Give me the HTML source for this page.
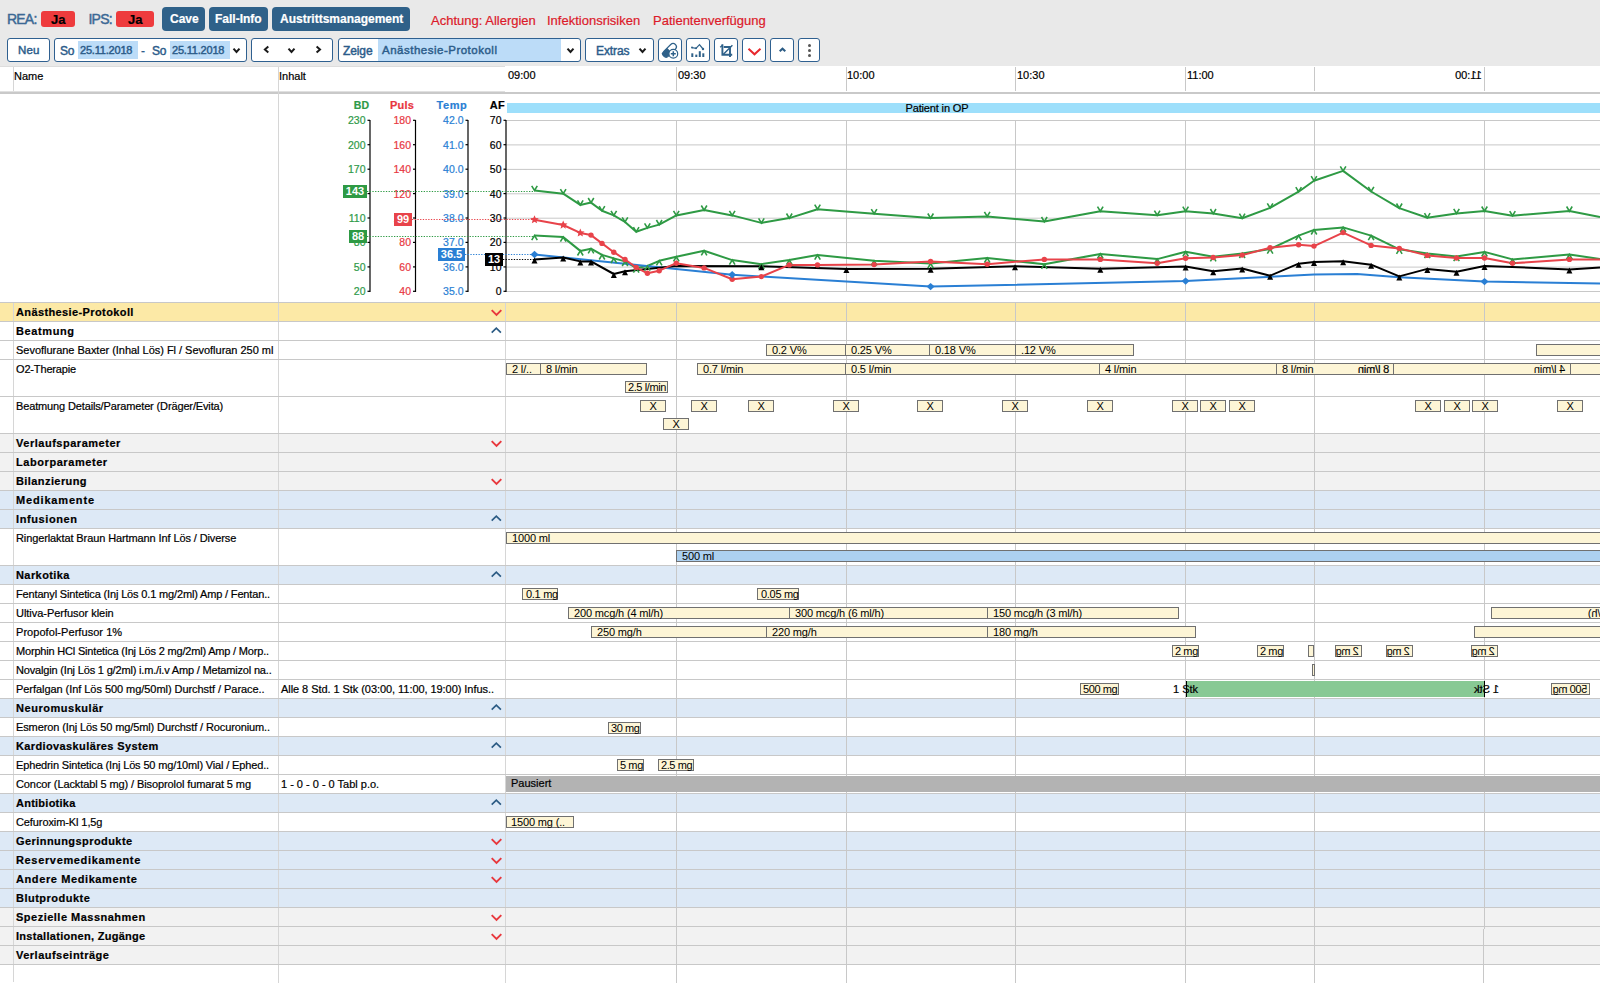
<!DOCTYPE html><html><head><meta charset="utf-8"><style>
html,body{margin:0;padding:0;}
body{width:1600px;height:988px;position:relative;overflow:hidden;background:#fff;font-family:"Liberation Sans", sans-serif;}
.t{position:absolute;white-space:nowrap;line-height:1;-webkit-text-stroke:0.2px;}
.r{position:absolute;box-sizing:border-box;}
.bar{position:absolute;box-sizing:border-box;border:1px solid #707070;background:#fdf5d6;font-size:11px;line-height:9px;white-space:nowrap;overflow:visible;color:#000;letter-spacing:-0.15px;}
.mir{transform:scaleX(-1);}
svg{position:absolute;left:0;top:0;}
</style></head><body>
<div class="r" style="left:0px;top:0px;width:1600px;height:67px;background:#e9e9e9;"></div>
<div class="t" style="left:7px;top:12.15px;font-size:14px;font-weight:normal;color:#3b6894;letter-spacing:-0.8px;-webkit-text-stroke:0.45px #3b6894;">REA:</div>
<div class="r" style="left:41px;top:11px;width:34px;height:16px;background:#ee3b3d;border-radius:3px;"></div>
<div class="t" style="left:51px;top:12.60px;font-size:13px;font-weight:bold;color:#000;">Ja</div>
<div class="t" style="left:88.5px;top:12.15px;font-size:14px;font-weight:normal;color:#3b6894;letter-spacing:-0.8px;-webkit-text-stroke:0.45px #3b6894;">IPS:</div>
<div class="r" style="left:116px;top:11px;width:38px;height:16px;background:#ee3b3d;border-radius:3px;"></div>
<div class="t" style="left:128px;top:12.60px;font-size:13px;font-weight:bold;color:#000;">Ja</div>
<div class="r" style="left:162px;top:7px;width:43px;height:24px;background:#2f6189;border-radius:4px;"></div>
<div class="t" style="left:170px;top:13.44px;font-size:12px;font-weight:bold;color:#fff;">Cave</div>
<div class="r" style="left:209px;top:7px;width:59px;height:24px;background:#2f6189;border-radius:4px;"></div>
<div class="t" style="left:215px;top:13.44px;font-size:12px;font-weight:bold;color:#fff;">Fall-Info</div>
<div class="r" style="left:272px;top:7px;width:138px;height:24px;background:#2f6189;border-radius:4px;"></div>
<div class="t" style="left:280px;top:13.44px;font-size:12px;font-weight:bold;color:#fff;">Austrittsmanagement</div>
<div class="t" style="left:431px;top:14.00px;font-size:13px;font-weight:normal;color:#dc1a2a;">Achtung: Allergien</div>
<div class="t" style="left:547px;top:14.00px;font-size:13px;font-weight:normal;color:#dc1a2a;">Infektionsrisiken</div>
<div class="t" style="left:653px;top:14.00px;font-size:13px;font-weight:normal;color:#dc1a2a;">Patientenverfügung</div>
<div class="r" style="left:7px;top:38px;width:43px;height:24px;background:#fff;border:1px solid #2f6090;border-radius:3px;"></div>
<div class="t" style="left:18px;top:44.87px;font-size:11.5px;font-weight:normal;color:#2c5c8a;letter-spacing:0.2px;-webkit-text-stroke:0.45px #2c5c8a;">Neu</div>
<div class="r" style="left:54px;top:38px;width:193px;height:24px;background:#fff;border:1px solid #2f6090;border-radius:3px;"></div>
<div class="t" style="left:60px;top:44.64px;font-size:12px;font-weight:normal;color:#2c5c8a;letter-spacing:-0.3px;-webkit-text-stroke:0.45px #2c5c8a;">So</div>
<div class="r" style="left:78px;top:41px;width:60px;height:17.5px;background:#bcdcf8;"></div>
<div class="t" style="left:80px;top:45.29px;font-size:11px;font-weight:normal;color:#2c5c8a;letter-spacing:-0.2px;-webkit-text-stroke:0.45px #2c5c8a;">25.11.2018</div>
<div class="t" style="left:141px;top:44.64px;font-size:12px;font-weight:normal;color:#2c5c8a;">-</div>
<div class="t" style="left:152px;top:44.64px;font-size:12px;font-weight:normal;color:#2c5c8a;letter-spacing:-0.3px;-webkit-text-stroke:0.45px #2c5c8a;">So</div>
<div class="r" style="left:170px;top:41px;width:60px;height:17.5px;background:#bcdcf8;"></div>
<div class="t" style="left:172px;top:45.29px;font-size:11px;font-weight:normal;color:#2c5c8a;letter-spacing:-0.2px;-webkit-text-stroke:0.45px #2c5c8a;">25.11.2018</div>
<div class="r" style="left:251px;top:38px;width:82px;height:24px;background:#fff;border:1px solid #2f6090;border-radius:3px;"></div>
<div class="r" style="left:338px;top:38px;width:243px;height:24px;background:#fff;border:1px solid #2f6090;border-radius:3px;"></div>
<div class="t" style="left:343px;top:44.64px;font-size:12px;font-weight:normal;color:#2c5c8a;letter-spacing:-0.1px;-webkit-text-stroke:0.45px #2c5c8a;">Zeige</div>
<div class="r" style="left:378px;top:39px;width:183px;height:22px;background:#bcdcf8;"></div>
<div class="t" style="left:382px;top:44.87px;font-size:11.5px;font-weight:normal;color:#2c5c8a;letter-spacing:0.5px;-webkit-text-stroke:0.45px #2c5c8a;">Anästhesie-Protokoll</div>
<div class="r" style="left:585px;top:38px;width:69px;height:24px;background:#fff;border:1px solid #2f6090;border-radius:3px;"></div>
<div class="t" style="left:596px;top:44.64px;font-size:12px;font-weight:normal;color:#2c5c8a;letter-spacing:-0.1px;-webkit-text-stroke:0.45px #2c5c8a;">Extras</div>
<div class="r" style="left:658px;top:38px;width:24px;height:24px;background:#fff;border:1px solid #2f6090;border-radius:3px;"></div>
<div class="r" style="left:686px;top:38px;width:24px;height:24px;background:#fff;border:1px solid #2f6090;border-radius:3px;"></div>
<div class="r" style="left:714px;top:38px;width:24px;height:24px;background:#fff;border:1px solid #2f6090;border-radius:3px;"></div>
<div class="r" style="left:742px;top:38px;width:24px;height:24px;background:#fff;border:1px solid #2f6090;border-radius:3px;"></div>
<div class="r" style="left:770px;top:38px;width:24px;height:24px;background:#fff;border:1px solid #2f6090;border-radius:3px;"></div>
<div class="r" style="left:798px;top:38px;width:22px;height:24px;background:#fff;border:1px solid #2f6090;border-radius:3px;"></div>
<div class="r" style="left:0px;top:303px;width:1600px;height:18px;background:#fce9a6;"></div>
<div class="r" style="left:0px;top:322px;width:1600px;height:18px;background:#fff;"></div>
<div class="r" style="left:0px;top:341px;width:1600px;height:18px;background:#fff;"></div>
<div class="r" style="left:0px;top:360px;width:1600px;height:36px;background:#fff;"></div>
<div class="r" style="left:0px;top:397px;width:1600px;height:36px;background:#fff;"></div>
<div class="r" style="left:0px;top:434px;width:1600px;height:18px;background:#f2f2f2;"></div>
<div class="r" style="left:0px;top:453px;width:1600px;height:18px;background:#f2f2f2;"></div>
<div class="r" style="left:0px;top:472px;width:1600px;height:18px;background:#f2f2f2;"></div>
<div class="r" style="left:0px;top:491px;width:1600px;height:18px;background:#dde9f6;"></div>
<div class="r" style="left:0px;top:510px;width:1600px;height:18px;background:#dde9f6;"></div>
<div class="r" style="left:0px;top:529px;width:1600px;height:36px;background:#fff;"></div>
<div class="r" style="left:0px;top:566px;width:1600px;height:18px;background:#dde9f6;"></div>
<div class="r" style="left:0px;top:585px;width:1600px;height:18px;background:#fff;"></div>
<div class="r" style="left:0px;top:604px;width:1600px;height:18px;background:#fff;"></div>
<div class="r" style="left:0px;top:623px;width:1600px;height:18px;background:#fff;"></div>
<div class="r" style="left:0px;top:642px;width:1600px;height:18px;background:#fff;"></div>
<div class="r" style="left:0px;top:661px;width:1600px;height:18px;background:#fff;"></div>
<div class="r" style="left:0px;top:680px;width:1600px;height:18px;background:#fff;"></div>
<div class="r" style="left:0px;top:699px;width:1600px;height:18px;background:#dde9f6;"></div>
<div class="r" style="left:0px;top:718px;width:1600px;height:18px;background:#fff;"></div>
<div class="r" style="left:0px;top:737px;width:1600px;height:18px;background:#dde9f6;"></div>
<div class="r" style="left:0px;top:756px;width:1600px;height:18px;background:#fff;"></div>
<div class="r" style="left:0px;top:775px;width:1600px;height:18px;background:#fff;"></div>
<div class="r" style="left:0px;top:794px;width:1600px;height:18px;background:#dde9f6;"></div>
<div class="r" style="left:0px;top:813px;width:1600px;height:18px;background:#fff;"></div>
<div class="r" style="left:0px;top:832px;width:1600px;height:18px;background:#dde9f6;"></div>
<div class="r" style="left:0px;top:851px;width:1600px;height:18px;background:#dde9f6;"></div>
<div class="r" style="left:0px;top:870px;width:1600px;height:18px;background:#dde9f6;"></div>
<div class="r" style="left:0px;top:889px;width:1600px;height:18px;background:#dde9f6;"></div>
<div class="r" style="left:0px;top:908px;width:1600px;height:18px;background:#f2f2f2;"></div>
<div class="r" style="left:0px;top:927px;width:1600px;height:18px;background:#f2f2f2;"></div>
<div class="r" style="left:0px;top:946px;width:1600px;height:18px;background:#f2f2f2;"></div>
<div class="r" style="left:0px;top:67px;width:1600px;height:24px;background:#fff;"></div>
<div class="r" style="left:0px;top:66px;width:505px;height:1px;background:#dddddd;"></div>
<div class="r" style="left:505px;top:66px;width:1095px;height:1px;background:#fff;"></div>
<div class="r" style="left:0px;top:91px;width:505px;height:1px;background:#e0e0e0;"></div>
<div class="r" style="left:0px;top:92px;width:1600px;height:2px;background:#c9c9c9;"></div>
<div class="r" style="left:13px;top:67px;width:1px;height:24px;background:#d6d6d6;"></div>
<div class="r" style="left:13px;top:303px;width:1px;height:679px;background:#d6d6d6;"></div>
<div class="r" style="left:278px;top:67px;width:1px;height:916px;background:#d6d6d6;"></div>
<div class="r" style="left:505px;top:303px;width:1px;height:680px;background:#d6d6d6;"></div>
<div class="r" style="left:676px;top:67px;width:1px;height:24px;background:#c8c8c8;"></div>
<div class="r" style="left:676px;top:94px;width:1px;height:889px;background:#c8c8c8;"></div>
<div class="r" style="left:846px;top:67px;width:1px;height:24px;background:#c8c8c8;"></div>
<div class="r" style="left:846px;top:94px;width:1px;height:889px;background:#c8c8c8;"></div>
<div class="r" style="left:1015px;top:67px;width:1px;height:24px;background:#c8c8c8;"></div>
<div class="r" style="left:1015px;top:94px;width:1px;height:889px;background:#c8c8c8;"></div>
<div class="r" style="left:1185px;top:67px;width:1px;height:24px;background:#c8c8c8;"></div>
<div class="r" style="left:1185px;top:94px;width:1px;height:889px;background:#c8c8c8;"></div>
<div class="r" style="left:1314px;top:67px;width:1px;height:24px;background:#c8c8c8;"></div>
<div class="r" style="left:1314px;top:94px;width:1px;height:889px;background:#c8c8c8;"></div>
<div class="r" style="left:1484px;top:67px;width:1px;height:24px;background:#c8c8c8;"></div>
<div class="r" style="left:1484px;top:94px;width:1px;height:835px;background:#c8c8c8;"></div>
<div class="r" style="left:1483px;top:929px;width:1px;height:54px;background:#c8c8c8;"></div>
<div class="r" style="left:0px;top:302px;width:1600px;height:1px;background:#c8c8c8;"></div>
<div class="r" style="left:0px;top:321px;width:1600px;height:1px;background:#c8c8c8;"></div>
<div class="r" style="left:0px;top:340px;width:1600px;height:1px;background:#c8c8c8;"></div>
<div class="r" style="left:0px;top:359px;width:1600px;height:1px;background:#c8c8c8;"></div>
<div class="r" style="left:0px;top:396px;width:1600px;height:1px;background:#c8c8c8;"></div>
<div class="r" style="left:0px;top:433px;width:1600px;height:1px;background:#c8c8c8;"></div>
<div class="r" style="left:0px;top:452px;width:1600px;height:1px;background:#c8c8c8;"></div>
<div class="r" style="left:0px;top:471px;width:1600px;height:1px;background:#c8c8c8;"></div>
<div class="r" style="left:0px;top:490px;width:1600px;height:1px;background:#c8c8c8;"></div>
<div class="r" style="left:0px;top:509px;width:1600px;height:1px;background:#c8c8c8;"></div>
<div class="r" style="left:0px;top:528px;width:1600px;height:1px;background:#c8c8c8;"></div>
<div class="r" style="left:0px;top:565px;width:1600px;height:1px;background:#c8c8c8;"></div>
<div class="r" style="left:0px;top:584px;width:1600px;height:1px;background:#c8c8c8;"></div>
<div class="r" style="left:0px;top:603px;width:1600px;height:1px;background:#c8c8c8;"></div>
<div class="r" style="left:0px;top:622px;width:1600px;height:1px;background:#c8c8c8;"></div>
<div class="r" style="left:0px;top:641px;width:1600px;height:1px;background:#c8c8c8;"></div>
<div class="r" style="left:0px;top:660px;width:1600px;height:1px;background:#c8c8c8;"></div>
<div class="r" style="left:0px;top:679px;width:1600px;height:1px;background:#c8c8c8;"></div>
<div class="r" style="left:0px;top:698px;width:1600px;height:1px;background:#c8c8c8;"></div>
<div class="r" style="left:0px;top:717px;width:1600px;height:1px;background:#c8c8c8;"></div>
<div class="r" style="left:0px;top:736px;width:1600px;height:1px;background:#c8c8c8;"></div>
<div class="r" style="left:0px;top:755px;width:1600px;height:1px;background:#c8c8c8;"></div>
<div class="r" style="left:0px;top:774px;width:1600px;height:1px;background:#c8c8c8;"></div>
<div class="r" style="left:0px;top:793px;width:1600px;height:1px;background:#c8c8c8;"></div>
<div class="r" style="left:0px;top:812px;width:1600px;height:1px;background:#c8c8c8;"></div>
<div class="r" style="left:0px;top:831px;width:1600px;height:1px;background:#c8c8c8;"></div>
<div class="r" style="left:0px;top:850px;width:1600px;height:1px;background:#c8c8c8;"></div>
<div class="r" style="left:0px;top:869px;width:1600px;height:1px;background:#c8c8c8;"></div>
<div class="r" style="left:0px;top:888px;width:1600px;height:1px;background:#c8c8c8;"></div>
<div class="r" style="left:0px;top:907px;width:1600px;height:1px;background:#c8c8c8;"></div>
<div class="r" style="left:0px;top:926px;width:1600px;height:1px;background:#c8c8c8;"></div>
<div class="r" style="left:0px;top:945px;width:1600px;height:1px;background:#c8c8c8;"></div>
<div class="r" style="left:0px;top:964px;width:1600px;height:1px;background:#c8c8c8;"></div>
<div class="t" style="left:14px;top:71.09px;font-size:11px;font-weight:normal;color:#000;">Name</div>
<div class="t" style="left:279px;top:71.09px;font-size:11px;font-weight:normal;color:#000;">Inhalt</div>
<div class="t" style="left:508px;top:69.69px;font-size:11px;font-weight:normal;color:#000;">09:00</div>
<div class="t" style="left:678px;top:69.69px;font-size:11px;font-weight:normal;color:#000;">09:30</div>
<div class="t" style="left:847px;top:69.69px;font-size:11px;font-weight:normal;color:#000;">10:00</div>
<div class="t" style="left:1017px;top:69.69px;font-size:11px;font-weight:normal;color:#000;">10:30</div>
<div class="t" style="left:1187px;top:69.69px;font-size:11px;font-weight:normal;color:#000;">11:00</div>
<div class="t mir" style="left:1455px;top:69.7px;font-size:11px;">11:00</div>
<div class="t" style="left:16px;top:307.09px;font-size:11px;font-weight:bold;color:#000;letter-spacing:0.387px;">Anästhesie-Protokoll</div>
<div class="t" style="left:16px;top:326.09px;font-size:11px;font-weight:bold;color:#000;letter-spacing:0.607px;">Beatmung</div>
<div class="t" style="left:16px;top:345.09px;font-size:11px;font-weight:normal;color:#000;letter-spacing:-0.024px;">Sevoflurane Baxter (Inhal Lös) Fl / Sevofluran 250 ml</div>
<div class="t" style="left:16px;top:364.09px;font-size:11px;font-weight:normal;color:#000;letter-spacing:-0.155px;">O2-Therapie</div>
<div class="t" style="left:16px;top:401.09px;font-size:11px;font-weight:normal;color:#000;letter-spacing:-0.138px;">Beatmung Details/Parameter (Dräger/Evita)</div>
<div class="t" style="left:16px;top:438.09px;font-size:11px;font-weight:bold;color:#000;letter-spacing:0.522px;">Verlaufsparameter</div>
<div class="t" style="left:16px;top:457.09px;font-size:11px;font-weight:bold;color:#000;letter-spacing:0.565px;">Laborparameter</div>
<div class="t" style="left:16px;top:476.09px;font-size:11px;font-weight:bold;color:#000;letter-spacing:0.414px;">Bilanzierung</div>
<div class="t" style="left:16px;top:495.09px;font-size:11px;font-weight:bold;color:#000;letter-spacing:0.835px;">Medikamente</div>
<div class="t" style="left:16px;top:514.09px;font-size:11px;font-weight:bold;color:#000;letter-spacing:0.606px;">Infusionen</div>
<div class="t" style="left:16px;top:533.09px;font-size:11px;font-weight:normal;color:#000;letter-spacing:-0.106px;">Ringerlaktat Braun Hartmann Inf Lös / Diverse</div>
<div class="t" style="left:16px;top:570.09px;font-size:11px;font-weight:bold;color:#000;letter-spacing:0.419px;">Narkotika</div>
<div class="t" style="left:16px;top:589.09px;font-size:11px;font-weight:normal;color:#000;letter-spacing:-0.154px;">Fentanyl Sintetica (Inj Lös 0.1 mg/2ml) Amp / Fentan..</div>
<div class="t" style="left:16px;top:608.09px;font-size:11px;font-weight:normal;color:#000;letter-spacing:-0.038px;">Ultiva-Perfusor klein</div>
<div class="t" style="left:16px;top:627.09px;font-size:11px;font-weight:normal;color:#000;letter-spacing:0.05px;">Propofol-Perfusor 1%</div>
<div class="t" style="left:16px;top:646.09px;font-size:11px;font-weight:normal;color:#000;letter-spacing:-0.188px;">Morphin HCl Sintetica (Inj Lös 2 mg/2ml) Amp / Morp..</div>
<div class="t" style="left:16px;top:665.09px;font-size:11px;font-weight:normal;color:#000;letter-spacing:-0.174px;">Novalgin (Inj Lös 1 g/2ml) i.m./i.v Amp / Metamizol na..</div>
<div class="t" style="left:16px;top:684.09px;font-size:11px;font-weight:normal;color:#000;letter-spacing:-0.053px;">Perfalgan (Inf Lös 500 mg/50ml) Durchstf / Parace..</div>
<div class="t" style="left:281px;top:684.09px;font-size:11px;font-weight:normal;color:#000;letter-spacing:-0.059px;">Alle 8 Std. 1 Stk (03:00, 11:00, 19:00) Infus..</div>
<div class="t" style="left:16px;top:703.09px;font-size:11px;font-weight:bold;color:#000;letter-spacing:0.538px;">Neuromuskulär</div>
<div class="t" style="left:16px;top:722.09px;font-size:11px;font-weight:normal;color:#000;letter-spacing:-0.115px;">Esmeron (Inj Lös 50 mg/5ml) Durchstf / Rocuronium..</div>
<div class="t" style="left:16px;top:741.09px;font-size:11px;font-weight:bold;color:#000;letter-spacing:0.38px;">Kardiovaskuläres System</div>
<div class="t" style="left:16px;top:760.09px;font-size:11px;font-weight:normal;color:#000;letter-spacing:-0.146px;">Ephedrin Sintetica (Inj Lös 50 mg/10ml) Vial / Ephed..</div>
<div class="t" style="left:16px;top:779.09px;font-size:11px;font-weight:normal;color:#000;letter-spacing:-0.099px;">Concor (Lacktabl 5 mg) / Bisoprolol fumarat 5 mg</div>
<div class="t" style="left:281px;top:779.09px;font-size:11px;font-weight:normal;color:#000;letter-spacing:-0.005px;">1 - 0 - 0 - 0 Tabl p.o.</div>
<div class="t" style="left:16px;top:798.09px;font-size:11px;font-weight:bold;color:#000;letter-spacing:0.245px;">Antibiotika</div>
<div class="t" style="left:16px;top:817.09px;font-size:11px;font-weight:normal;color:#000;letter-spacing:-0.097px;">Cefuroxim-Kl 1,5g</div>
<div class="t" style="left:16px;top:836.09px;font-size:11px;font-weight:bold;color:#000;letter-spacing:0.432px;">Gerinnungsprodukte</div>
<div class="t" style="left:16px;top:855.09px;font-size:11px;font-weight:bold;color:#000;letter-spacing:0.656px;">Reservemedikamente</div>
<div class="t" style="left:16px;top:874.09px;font-size:11px;font-weight:bold;color:#000;letter-spacing:0.603px;">Andere Medikamente</div>
<div class="t" style="left:16px;top:893.09px;font-size:11px;font-weight:bold;color:#000;letter-spacing:0.495px;">Blutprodukte</div>
<div class="t" style="left:16px;top:912.09px;font-size:11px;font-weight:bold;color:#000;letter-spacing:0.492px;">Spezielle Massnahmen</div>
<div class="t" style="left:16px;top:931.09px;font-size:11px;font-weight:bold;color:#000;letter-spacing:0.289px;">Installationen, Zugänge</div>
<div class="t" style="left:16px;top:950.09px;font-size:11px;font-weight:bold;color:#000;letter-spacing:0.49px;">Verlaufseinträge</div>
<div class="bar" style="left:766px;top:344px;width:80px;height:12px;background:#fdf5d6;border-color:#707070;padding-left:5px;line-height:10px;">0.2 V%</div>
<div class="bar" style="left:845px;top:344px;width:85px;height:12px;background:#fdf5d6;border-color:#707070;padding-left:5px;line-height:10px;">0.25 V%</div>
<div class="bar" style="left:929px;top:344px;width:87px;height:12px;background:#fdf5d6;border-color:#707070;padding-left:5px;line-height:10px;">0.18 V%</div>
<div class="bar" style="left:1015px;top:344px;width:119px;height:12px;background:#fdf5d6;border-color:#707070;padding-left:5px;line-height:10px;">.12 V%</div>
<div class="bar" style="left:1536px;top:344px;width:65px;height:12px;background:#fdf5d6;border-color:#707070;padding-left:5px;line-height:10px;"></div>
<div class="bar" style="left:506px;top:363px;width:35px;height:12px;background:#fdf5d6;border-color:#707070;padding-left:5px;line-height:10px;">2 l/..</div>
<div class="bar" style="left:540px;top:363px;width:107px;height:12px;background:#fdf5d6;border-color:#707070;padding-left:5px;line-height:10px;">8 l/min</div>
<div class="bar" style="left:697px;top:363px;width:149px;height:12px;background:#fdf5d6;border-color:#707070;padding-left:5px;line-height:10px;">0.7 l/min</div>
<div class="bar" style="left:845px;top:363px;width:255px;height:12px;background:#fdf5d6;border-color:#707070;padding-left:5px;line-height:10px;">0.5 l/min</div>
<div class="bar" style="left:1099px;top:363px;width:178px;height:12px;background:#fdf5d6;border-color:#707070;padding-left:5px;line-height:10px;">4 l/min</div>
<div class="bar" style="left:1276px;top:363px;width:118px;height:12px;background:#fdf5d6;border-color:#707070;padding-left:5px;line-height:10px;">8 l/min</div>
<div class="bar" style="left:1393px;top:363px;width:178px;height:12px;background:#fdf5d6;border-color:#707070;"><div class="mir" style="position:absolute;right:5px;top:0;line-height:10px;">4 l/min</div></div>
<div class="t mir" style="left:1358px;top:363.5px;font-size:11px;letter-spacing:-0.15px;">8 l/min</div>
<div class="bar" style="left:1570px;top:363px;width:31px;height:12px;background:#fdf5d6;border-color:#707070;padding-left:5px;line-height:10px;"></div>
<div class="bar" style="left:625px;top:381px;width:43px;height:12px;background:#fdf5d6;border-color:#707070;padding-left:2px;line-height:10px;letter-spacing:-0.4px;">2.5 l/min</div>
<div class="bar" style="left:640px;top:400px;width:26px;height:12px;text-align:center;line-height:10px;">X</div>
<div class="bar" style="left:691px;top:400px;width:26px;height:12px;text-align:center;line-height:10px;">X</div>
<div class="bar" style="left:748px;top:400px;width:26px;height:12px;text-align:center;line-height:10px;">X</div>
<div class="bar" style="left:833px;top:400px;width:26px;height:12px;text-align:center;line-height:10px;">X</div>
<div class="bar" style="left:917px;top:400px;width:26px;height:12px;text-align:center;line-height:10px;">X</div>
<div class="bar" style="left:1002px;top:400px;width:26px;height:12px;text-align:center;line-height:10px;">X</div>
<div class="bar" style="left:1087px;top:400px;width:26px;height:12px;text-align:center;line-height:10px;">X</div>
<div class="bar" style="left:1172px;top:400px;width:26px;height:12px;text-align:center;line-height:10px;">X</div>
<div class="bar" style="left:1200px;top:400px;width:26px;height:12px;text-align:center;line-height:10px;">X</div>
<div class="bar" style="left:1229px;top:400px;width:26px;height:12px;text-align:center;line-height:10px;">X</div>
<div class="bar" style="left:1415px;top:400px;width:26px;height:12px;text-align:center;line-height:10px;">X</div>
<div class="bar" style="left:1444px;top:400px;width:26px;height:12px;text-align:center;line-height:10px;">X</div>
<div class="bar" style="left:1472px;top:400px;width:26px;height:12px;text-align:center;line-height:10px;">X</div>
<div class="bar" style="left:1557px;top:400px;width:26px;height:12px;text-align:center;line-height:10px;">X</div>
<div class="bar" style="left:663px;top:418px;width:26px;height:12px;text-align:center;line-height:10px;">X</div>
<div class="bar" style="left:506px;top:532px;width:1095px;height:12px;background:#fdf5d6;border-color:#707070;padding-left:5px;line-height:10px;">1000 ml</div>
<div class="bar" style="left:676px;top:550px;width:925px;height:12px;background:#acd0f0;border-color:#707070;padding-left:5px;line-height:10px;">500 ml</div>
<div class="bar" style="left:522px;top:588px;width:36px;height:12px;background:#fdf5d6;border-color:#707070;padding-left:3px;line-height:10px;letter-spacing:-0.3px;">0.1 mg</div>
<div class="bar" style="left:757px;top:588px;width:42px;height:12px;background:#fdf5d6;border-color:#707070;padding-left:3px;line-height:10px;letter-spacing:-0.3px;">0.05 mg</div>
<div class="bar" style="left:568px;top:607px;width:222px;height:12px;background:#fdf5d6;border-color:#707070;padding-left:5px;line-height:10px;">200 mcg/h (4 ml/h)</div>
<div class="bar" style="left:789px;top:607px;width:199px;height:12px;background:#fdf5d6;border-color:#707070;padding-left:5px;line-height:10px;">300 mcg/h (6 ml/h)</div>
<div class="bar" style="left:987px;top:607px;width:192px;height:12px;background:#fdf5d6;border-color:#707070;padding-left:5px;line-height:10px;">150 mcg/h (3 ml/h)</div>
<div class="bar" style="left:1491px;top:607px;width:110px;height:12px;overflow:hidden;"><div class="mir" style="position:absolute;left:96px;top:0;line-height:10px;">150 mcg/h (3 ml/h)</div></div>
<div class="bar" style="left:591px;top:626px;width:176px;height:12px;background:#fdf5d6;border-color:#707070;padding-left:5px;line-height:10px;">250 mg/h</div>
<div class="bar" style="left:766px;top:626px;width:222px;height:12px;background:#fdf5d6;border-color:#707070;padding-left:5px;line-height:10px;">220 mg/h</div>
<div class="bar" style="left:987px;top:626px;width:209px;height:12px;background:#fdf5d6;border-color:#707070;padding-left:5px;line-height:10px;">180 mg/h</div>
<div class="bar" style="left:1474px;top:626px;width:127px;height:12px;background:#fdf5d6;border-color:#707070;padding-left:5px;line-height:10px;"></div>
<div class="bar" style="left:1172px;top:645px;width:27px;height:12px;background:#fdf5d6;border-color:#707070;padding-left:2px;line-height:10px;letter-spacing:-0.4px;">2 mg</div>
<div class="bar" style="left:1257px;top:645px;width:27px;height:12px;background:#fdf5d6;border-color:#707070;padding-left:2px;line-height:10px;letter-spacing:-0.4px;">2 mg</div>
<div class="bar" style="left:1308px;top:645px;width:6px;height:12px;background:#fdf5d6;border-color:#707070;padding-left:0px;line-height:10px;"></div>
<div class="bar" style="left:1335px;top:645px;width:27px;height:12px;background:#fdf5d6;border-color:#707070;letter-spacing:-0.4px;"><div class="mir" style="position:absolute;right:2px;top:0;line-height:10px;">2 mg</div></div>
<div class="bar" style="left:1386px;top:645px;width:27px;height:12px;background:#fdf5d6;border-color:#707070;letter-spacing:-0.4px;"><div class="mir" style="position:absolute;right:2px;top:0;line-height:10px;">2 mg</div></div>
<div class="bar" style="left:1471px;top:645px;width:27px;height:12px;background:#fdf5d6;border-color:#707070;letter-spacing:-0.4px;"><div class="mir" style="position:absolute;right:2px;top:0;line-height:10px;">2 mg</div></div>
<div class="bar" style="left:1312px;top:664px;width:3px;height:12px;background:#fdf5d6;border-color:#707070;padding-left:0px;line-height:10px;"></div>
<div class="bar" style="left:1080px;top:683px;width:39px;height:12px;background:#fdf5d6;border-color:#707070;padding-left:2px;line-height:10px;letter-spacing:-0.4px;">500 mg</div>
<div class="r" style="left:1186px;top:681px;width:298px;height:16px;background:#88c994;"></div>
<div class="r" style="left:1185.5px;top:681px;width:1.5px;height:16px;background:#000;"></div>
<div class="r" style="left:1483.5px;top:681px;width:1.5px;height:16px;background:#000;"></div>
<div class="t" style="left:1173px;top:684.19px;font-size:11px;font-weight:normal;color:#000;">1 Stk</div>
<div class="t mir" style="left:1474px;top:684.2px;font-size:11px;">1 Stk</div>
<div class="bar" style="left:1551px;top:683px;width:39px;height:12px;background:#fdf5d6;border-color:#707070;letter-spacing:-0.4px;"><div class="mir" style="position:absolute;right:2px;top:0;line-height:10px;">500 mg</div></div>
<div class="bar" style="left:608px;top:722px;width:33px;height:12px;background:#fdf5d6;border-color:#707070;padding-left:2px;line-height:10px;letter-spacing:-0.4px;">30 mg</div>
<div class="bar" style="left:617px;top:759px;width:27px;height:12px;background:#fdf5d6;border-color:#707070;padding-left:2px;line-height:10px;letter-spacing:-0.4px;">5 mg</div>
<div class="bar" style="left:658px;top:759px;width:36px;height:12px;background:#fdf5d6;border-color:#707070;padding-left:2px;line-height:10px;letter-spacing:-0.4px;">2.5 mg</div>
<div class="r" style="left:506px;top:776px;width:1094px;height:16px;background:#b3b3b3;"></div>
<div class="t" style="left:511px;top:778.39px;font-size:11px;font-weight:normal;color:#000;">Pausiert</div>
<div class="bar" style="left:506px;top:816px;width:68px;height:12px;background:#fdf5d6;border-color:#707070;padding-left:4px;line-height:10px;">1500 mg (..</div>
<div class="r" style="left:279px;top:94px;width:1321px;height:208px;background:#fff;"></div>
<div class="r" style="left:507px;top:103px;width:1093px;height:10px;background:#9ddffb;"></div>
<div class="t" style="left:905.5px;top:102.99px;font-size:11px;font-weight:normal;color:#000;letter-spacing:-0.15px;">Patient in OP</div>
<div class="t" style="right:1234.5px;top:115.21px;font-size:10.5px;font-weight:normal;color:#2e9a48;">230</div>
<div class="t" style="right:1234.5px;top:139.64px;font-size:10.5px;font-weight:normal;color:#2e9a48;">200</div>
<div class="t" style="right:1234.5px;top:164.07px;font-size:10.5px;font-weight:normal;color:#2e9a48;">170</div>
<div class="t" style="right:1234.5px;top:188.50px;font-size:10.5px;font-weight:normal;color:#2e9a48;">140</div>
<div class="t" style="right:1234.5px;top:212.93px;font-size:10.5px;font-weight:normal;color:#2e9a48;">110</div>
<div class="t" style="right:1234.5px;top:237.35px;font-size:10.5px;font-weight:normal;color:#2e9a48;">80</div>
<div class="t" style="right:1234.5px;top:261.78px;font-size:10.5px;font-weight:normal;color:#2e9a48;">50</div>
<div class="t" style="right:1234.5px;top:286.21px;font-size:10.5px;font-weight:normal;color:#2e9a48;">20</div>
<div class="t" style="right:1230.5px;top:99.71px;font-size:10.5px;font-weight:bold;color:#2e9a48;letter-spacing:0.3px;">BD</div>
<div class="t" style="right:1189.0px;top:115.21px;font-size:10.5px;font-weight:normal;color:#e8373f;">180</div>
<div class="t" style="right:1189.0px;top:139.64px;font-size:10.5px;font-weight:normal;color:#e8373f;">160</div>
<div class="t" style="right:1189.0px;top:164.07px;font-size:10.5px;font-weight:normal;color:#e8373f;">140</div>
<div class="t" style="right:1189.0px;top:188.50px;font-size:10.5px;font-weight:normal;color:#e8373f;">120</div>
<div class="t" style="right:1189.0px;top:212.93px;font-size:10.5px;font-weight:normal;color:#e8373f;">100</div>
<div class="t" style="right:1189.0px;top:237.35px;font-size:10.5px;font-weight:normal;color:#e8373f;">80</div>
<div class="t" style="right:1189.0px;top:261.78px;font-size:10.5px;font-weight:normal;color:#e8373f;">60</div>
<div class="t" style="right:1189.0px;top:286.21px;font-size:10.5px;font-weight:normal;color:#e8373f;">40</div>
<div class="t" style="right:1186.0px;top:100.09px;font-size:11px;font-weight:bold;color:#e8373f;letter-spacing:0.2px;">Puls</div>
<div class="t" style="right:1136.5px;top:115.21px;font-size:10.5px;font-weight:normal;color:#2a7fd4;">42.0</div>
<div class="t" style="right:1136.5px;top:139.64px;font-size:10.5px;font-weight:normal;color:#2a7fd4;">41.0</div>
<div class="t" style="right:1136.5px;top:164.07px;font-size:10.5px;font-weight:normal;color:#2a7fd4;">40.0</div>
<div class="t" style="right:1136.5px;top:188.50px;font-size:10.5px;font-weight:normal;color:#2a7fd4;">39.0</div>
<div class="t" style="right:1136.5px;top:212.93px;font-size:10.5px;font-weight:normal;color:#2a7fd4;">38.0</div>
<div class="t" style="right:1136.5px;top:237.35px;font-size:10.5px;font-weight:normal;color:#2a7fd4;">37.0</div>
<div class="t" style="right:1136.5px;top:261.78px;font-size:10.5px;font-weight:normal;color:#2a7fd4;">36.0</div>
<div class="t" style="right:1136.5px;top:286.21px;font-size:10.5px;font-weight:normal;color:#2a7fd4;">35.0</div>
<div class="t" style="right:1132.6px;top:100.09px;font-size:11px;font-weight:bold;color:#2a7fd4;letter-spacing:0.6px;">Temp</div>
<div class="t" style="right:1098.5px;top:115.21px;font-size:10.5px;font-weight:normal;color:#000;">70</div>
<div class="t" style="right:1098.5px;top:139.64px;font-size:10.5px;font-weight:normal;color:#000;">60</div>
<div class="t" style="right:1098.5px;top:164.07px;font-size:10.5px;font-weight:normal;color:#000;">50</div>
<div class="t" style="right:1098.5px;top:188.50px;font-size:10.5px;font-weight:normal;color:#000;">40</div>
<div class="t" style="right:1098.5px;top:212.93px;font-size:10.5px;font-weight:normal;color:#000;">30</div>
<div class="t" style="right:1098.5px;top:237.35px;font-size:10.5px;font-weight:normal;color:#000;">20</div>
<div class="t" style="right:1098.5px;top:261.78px;font-size:10.5px;font-weight:normal;color:#000;">10</div>
<div class="t" style="right:1098.5px;top:286.21px;font-size:10.5px;font-weight:normal;color:#000;">0</div>
<div class="t" style="right:1095.0px;top:100.09px;font-size:11px;font-weight:bold;color:#000;letter-spacing:0.3px;">AF</div>
<svg width="1600" height="988" style="position:absolute;left:0;top:0;"><polyline points="233.5,48.599999999999994 236.5,52.0 239.5,48.599999999999994" fill="none" stroke="#1a1a1a" stroke-width="2.0"/><polyline points="268.3,46.5 264.90000000000003,49.5 268.3,52.5" fill="none" stroke="#1a1a1a" stroke-width="2.0"/><polyline points="288.5,48.599999999999994 291.5,52.0 294.5,48.599999999999994" fill="none" stroke="#1a1a1a" stroke-width="2.0"/><polyline points="316.6,46.5 320.0,49.5 316.6,52.5" fill="none" stroke="#1a1a1a" stroke-width="2.0"/><polyline points="567.5,48.599999999999994 570.5,52.0 573.5,48.599999999999994" fill="none" stroke="#1a1a1a" stroke-width="2.0"/><polyline points="639.5,48.599999999999994 642.5,52.0 645.5,48.599999999999994" fill="none" stroke="#1a1a1a" stroke-width="2.0"/><g transform="translate(669.6,50.3) rotate(-45)"><rect x="-8.2" y="-3.3" width="16.4" height="6.6" rx="3.3" fill="#fff" stroke="#2f6189" stroke-width="1.2"/><path d="M-8.2,-3.3 h8.2 v6.6 h-4.9 a3.3,3.3 0 0 1 -3.3,-3.3 z" transform="translate(0,0)" fill="#2f6189"/></g><circle cx="673.3" cy="53.8" r="4.4" fill="#fff" stroke="#2f6189" stroke-width="1.2"/><path d="M673.3,51.3 v5 M670.8,53.8 h5" stroke="#2f6189" stroke-width="1.5"/><polyline points="692,47.6 696,48.3 699.5,44.7 703,49" fill="none" stroke="#2f6189" stroke-width="1.2"/><circle cx="692" cy="47.6" r="1" fill="#2f6189"/><circle cx="696" cy="48.3" r="1" fill="#2f6189"/><circle cx="703" cy="49" r="1.2" fill="#2f6189"/><rect x="691.3" y="53.3" width="2" height="3.700000000000003" fill="#2f6189"/><rect x="695.3" y="54.6" width="2" height="2.3999999999999986" fill="#2f6189"/><rect x="698.8" y="51.2" width="2" height="5.799999999999997" fill="#2f6189"/><rect x="702.3" y="53.3" width="2" height="3.700000000000003" fill="#2f6189"/><path d="M722.4,44.3 V54.7 H732.2 M723.8,47 H730 V57" fill="none" stroke="#2f6189" stroke-width="1.9"/><path d="M720.2,47.3 L722.6,45.2 M723.4,54.2 L732.4,45.2" fill="none" stroke="#2f6189" stroke-width="1.4"/><polyline points="748.5,48.7 754.5,54.3 760.5,48.7" fill="none" stroke="#e8282d" stroke-width="2"/><polyline points="779.7,51.3 782.5,48.7 785.3,51.3" fill="none" stroke="#2b5b84" stroke-width="2"/><circle cx="809.5" cy="45.4" r="1.5" fill="#555"/><circle cx="809.5" cy="50.6" r="1.5" fill="#555"/><circle cx="809.5" cy="55.6" r="1.5" fill="#555"/><polyline points="491.7,310.20000000000005 496.5,315.0 501.3,310.20000000000005" fill="none" stroke="#e8383d" stroke-width="1.9"/><polyline points="491.7,332.59999999999997 496.3,328.2 500.90000000000003,332.59999999999997" fill="none" stroke="#2b5b84" stroke-width="1.7"/><polyline points="491.7,441.20000000000005 496.5,446.0 501.3,441.20000000000005" fill="none" stroke="#e8383d" stroke-width="1.9"/><polyline points="491.7,479.20000000000005 496.5,484.0 501.3,479.20000000000005" fill="none" stroke="#e8383d" stroke-width="1.9"/><polyline points="491.7,520.6 496.3,516.1999999999999 500.90000000000003,520.6" fill="none" stroke="#2b5b84" stroke-width="1.7"/><polyline points="491.7,576.6 496.3,572.1999999999999 500.90000000000003,576.6" fill="none" stroke="#2b5b84" stroke-width="1.7"/><polyline points="491.7,709.6 496.3,705.1999999999999 500.90000000000003,709.6" fill="none" stroke="#2b5b84" stroke-width="1.7"/><polyline points="491.7,747.6 496.3,743.1999999999999 500.90000000000003,747.6" fill="none" stroke="#2b5b84" stroke-width="1.7"/><polyline points="491.7,804.6 496.3,800.1999999999999 500.90000000000003,804.6" fill="none" stroke="#2b5b84" stroke-width="1.7"/><polyline points="491.7,839.2 496.5,844.0 501.3,839.2" fill="none" stroke="#e8383d" stroke-width="1.9"/><polyline points="491.7,858.2 496.5,863.0 501.3,858.2" fill="none" stroke="#e8383d" stroke-width="1.9"/><polyline points="491.7,877.2 496.5,882.0 501.3,877.2" fill="none" stroke="#e8383d" stroke-width="1.9"/><polyline points="491.7,915.2 496.5,920.0 501.3,915.2" fill="none" stroke="#e8383d" stroke-width="1.9"/><polyline points="491.7,934.2 496.5,939.0 501.3,934.2" fill="none" stroke="#e8383d" stroke-width="1.9"/><line x1="506" y1="267.1" x2="1600" y2="267.1" stroke="#c8c8c8" stroke-width="1"/><line x1="506" y1="242.6" x2="1600" y2="242.6" stroke="#c8c8c8" stroke-width="1"/><line x1="506" y1="218.2" x2="1600" y2="218.2" stroke="#c8c8c8" stroke-width="1"/><line x1="506" y1="193.8" x2="1600" y2="193.8" stroke="#c8c8c8" stroke-width="1"/><line x1="506" y1="169.4" x2="1600" y2="169.4" stroke="#c8c8c8" stroke-width="1"/><line x1="506" y1="144.9" x2="1600" y2="144.9" stroke="#c8c8c8" stroke-width="1"/><line x1="506" y1="120.5" x2="1600" y2="120.5" stroke="#c8c8c8" stroke-width="1"/><line x1="506" y1="291.5" x2="1600" y2="291.5" stroke="#c8c8c8" stroke-width="1"/><line x1="676.5" y1="120" x2="676.5" y2="292" stroke="#c8c8c8" stroke-width="1"/><line x1="846.5" y1="120" x2="846.5" y2="292" stroke="#c8c8c8" stroke-width="1"/><line x1="1015.5" y1="120" x2="1015.5" y2="292" stroke="#c8c8c8" stroke-width="1"/><line x1="1185.5" y1="120" x2="1185.5" y2="292" stroke="#c8c8c8" stroke-width="1"/><line x1="1314.5" y1="120" x2="1314.5" y2="292" stroke="#c8c8c8" stroke-width="1"/><line x1="1484.5" y1="120" x2="1484.5" y2="292" stroke="#c8c8c8" stroke-width="1"/><line x1="370" y1="120" x2="370" y2="292" stroke="#000" stroke-width="1.2"/><line x1="367.5" y1="120.3" x2="370" y2="120.3" stroke="#000" stroke-width="1.2"/><line x1="367.5" y1="144.7" x2="370" y2="144.7" stroke="#000" stroke-width="1.2"/><line x1="367.5" y1="169.2" x2="370" y2="169.2" stroke="#000" stroke-width="1.2"/><line x1="367.5" y1="193.6" x2="370" y2="193.6" stroke="#000" stroke-width="1.2"/><line x1="367.5" y1="218.0" x2="370" y2="218.0" stroke="#000" stroke-width="1.2"/><line x1="367.5" y1="242.4" x2="370" y2="242.4" stroke="#000" stroke-width="1.2"/><line x1="367.5" y1="266.9" x2="370" y2="266.9" stroke="#000" stroke-width="1.2"/><line x1="367.5" y1="291.3" x2="370" y2="291.3" stroke="#000" stroke-width="1.2"/><line x1="415.5" y1="120" x2="415.5" y2="292" stroke="#000" stroke-width="1.2"/><line x1="413.0" y1="120.3" x2="415.5" y2="120.3" stroke="#000" stroke-width="1.2"/><line x1="413.0" y1="144.7" x2="415.5" y2="144.7" stroke="#000" stroke-width="1.2"/><line x1="413.0" y1="169.2" x2="415.5" y2="169.2" stroke="#000" stroke-width="1.2"/><line x1="413.0" y1="193.6" x2="415.5" y2="193.6" stroke="#000" stroke-width="1.2"/><line x1="413.0" y1="218.0" x2="415.5" y2="218.0" stroke="#000" stroke-width="1.2"/><line x1="413.0" y1="242.4" x2="415.5" y2="242.4" stroke="#000" stroke-width="1.2"/><line x1="413.0" y1="266.9" x2="415.5" y2="266.9" stroke="#000" stroke-width="1.2"/><line x1="413.0" y1="291.3" x2="415.5" y2="291.3" stroke="#000" stroke-width="1.2"/><line x1="468" y1="120" x2="468" y2="292" stroke="#000" stroke-width="1.2"/><line x1="465.5" y1="120.3" x2="468" y2="120.3" stroke="#000" stroke-width="1.2"/><line x1="465.5" y1="144.7" x2="468" y2="144.7" stroke="#000" stroke-width="1.2"/><line x1="465.5" y1="169.2" x2="468" y2="169.2" stroke="#000" stroke-width="1.2"/><line x1="465.5" y1="193.6" x2="468" y2="193.6" stroke="#000" stroke-width="1.2"/><line x1="465.5" y1="218.0" x2="468" y2="218.0" stroke="#000" stroke-width="1.2"/><line x1="465.5" y1="242.4" x2="468" y2="242.4" stroke="#000" stroke-width="1.2"/><line x1="465.5" y1="266.9" x2="468" y2="266.9" stroke="#000" stroke-width="1.2"/><line x1="465.5" y1="291.3" x2="468" y2="291.3" stroke="#000" stroke-width="1.2"/><line x1="506" y1="120" x2="506" y2="292" stroke="#000" stroke-width="1.2"/><line x1="503.5" y1="120.3" x2="506" y2="120.3" stroke="#000" stroke-width="1.2"/><line x1="503.5" y1="144.7" x2="506" y2="144.7" stroke="#000" stroke-width="1.2"/><line x1="503.5" y1="169.2" x2="506" y2="169.2" stroke="#000" stroke-width="1.2"/><line x1="503.5" y1="193.6" x2="506" y2="193.6" stroke="#000" stroke-width="1.2"/><line x1="503.5" y1="218.0" x2="506" y2="218.0" stroke="#000" stroke-width="1.2"/><line x1="503.5" y1="242.4" x2="506" y2="242.4" stroke="#000" stroke-width="1.2"/><line x1="503.5" y1="266.9" x2="506" y2="266.9" stroke="#000" stroke-width="1.2"/><line x1="503.5" y1="291.3" x2="506" y2="291.3" stroke="#000" stroke-width="1.2"/><polyline points="534.5,190.4 563.2,193.7 580.3,204.9 591.0,202.6 602.0,210.8 613.8,215.4 625.0,222.0 636.2,231.8 647.4,227.9 659.2,224.6 676.3,215.4 704.1,210.1 732.2,215.4 761.4,222.9 789.3,218.1 817.5,209.2 874.1,213.7 930.6,218.1 987.2,216.5 1044.3,221.6 1100.3,211.2 1157.2,215.2 1185.6,211.2 1213.2,213.6 1242.2,218.2 1270.1,207.9 1298.6,191.7 1314.0,180.8 1343.1,170.9 1371.1,191.5 1399.3,208.1 1427.3,217.8 1456.5,213.4 1484.5,211.1 1512.5,215.7 1569.4,211.1 1600,216.9" fill="none" stroke="#2e9a44" stroke-width="2.0" stroke-linejoin="round"/><polyline points="534.5,235.5 563.2,237.1 580.3,250.9 591.0,248.7 602.0,254.9 613.8,258.4 625.0,261.4 636.2,268.0 647.4,266.0 659.2,260.8 676.3,256.8 704.1,250.8 732.2,260.1 761.4,264.2 789.3,260.1 817.5,255.0 874.1,260.7 930.6,263.5 987.2,258.0 1044.3,264.2 1100.3,253.9 1157.2,259.1 1185.6,251.8 1213.2,256.7 1242.2,253.4 1270.1,249.0 1298.6,235.6 1314.0,229.9 1343.1,227.4 1371.1,235.6 1399.3,249.3 1427.3,253.6 1456.5,256.6 1484.5,251.9 1512.5,259.4 1569.4,254.5 1600,258.9" fill="none" stroke="#2e9a44" stroke-width="2.0" stroke-linejoin="round"/><polyline points="534.5,254.5 732.2,274.8 930.6,286.6 1185.6,281.1 1314.0,274.6 1357.0,274.1 1399.3,277.3 1484.5,281.6 1600.0,283.4" fill="none" stroke="#2a7fd4" stroke-width="2.0" stroke-linejoin="round"/><polyline points="534.5,259.5 563.2,257.5 580.3,261.4 591.0,261.4 613.8,274.0 625.0,271.3 676.3,266.0 761.4,266.2 846.4,269.0 930.6,268.7 1015.0,266.2 1100.3,268.7 1185.6,266.4 1213.2,271.3 1242.2,268.5 1270.1,275.7 1298.6,263.7 1314.0,262.0 1343.1,261.2 1371.1,264.7 1399.3,276.4 1427.3,268.9 1456.5,271.7 1484.5,265.9 1569.4,269.4 1600.0,267.6" fill="none" stroke="#000" stroke-width="2.0" stroke-linejoin="round"/><polyline points="534.5,219.7 563.2,225.0 580.3,232.9 591.0,235.1 602.0,243.4 613.8,252.2 625.0,259.5 636.2,267.4 647.4,273.3 659.2,270.7 676.3,263.2 704.1,267.9 732.2,279.3 761.4,276.6 789.3,264.9 817.5,264.9 874.1,264.6 930.6,261.4 987.2,264.2 1044.3,259.4 1100.3,259.4 1157.2,263.2 1185.6,258.3 1213.2,257.5 1242.2,255.1 1270.1,247.7 1298.6,244.8 1314.0,246.1 1343.1,232.6 1371.1,245.4 1399.3,248.4 1427.3,255.4 1456.5,258.0 1484.5,258.0 1512.5,263.3 1569.4,259.4 1600,259.4" fill="none" stroke="#e8434a" stroke-width="2.0" stroke-linejoin="round"/><polyline points="531.7,185.8 534.5,190.4 537.3,185.8" fill="none" stroke="#2e9a44" stroke-width="1.6"/><polyline points="560.4000000000001,189.1 563.2,193.7 566.0,189.1" fill="none" stroke="#2e9a44" stroke-width="1.6"/><polyline points="577.5,200.3 580.3,204.9 583.0999999999999,200.3" fill="none" stroke="#2e9a44" stroke-width="1.6"/><polyline points="588.2,198.0 591,202.6 593.8,198.0" fill="none" stroke="#2e9a44" stroke-width="1.6"/><polyline points="599.2,206.20000000000002 602,210.8 604.8,206.20000000000002" fill="none" stroke="#2e9a44" stroke-width="1.6"/><polyline points="611.0,210.8 613.8,215.4 616.5999999999999,210.8" fill="none" stroke="#2e9a44" stroke-width="1.6"/><polyline points="622.2,217.4 625,222 627.8,217.4" fill="none" stroke="#2e9a44" stroke-width="1.6"/><polyline points="633.4000000000001,227.20000000000002 636.2,231.8 639.0,227.20000000000002" fill="none" stroke="#2e9a44" stroke-width="1.6"/><polyline points="644.6,223.3 647.4,227.9 650.1999999999999,223.3" fill="none" stroke="#2e9a44" stroke-width="1.6"/><polyline points="656.4000000000001,220.0 659.2,224.6 662.0,220.0" fill="none" stroke="#2e9a44" stroke-width="1.6"/><polyline points="673.5,210.8 676.3,215.4 679.0999999999999,210.8" fill="none" stroke="#2e9a44" stroke-width="1.6"/><polyline points="701.3000000000001,205.5 704.1,210.1 706.9,205.5" fill="none" stroke="#2e9a44" stroke-width="1.6"/><polyline points="729.4000000000001,210.8 732.2,215.4 735.0,210.8" fill="none" stroke="#2e9a44" stroke-width="1.6"/><polyline points="758.6,218.3 761.4,222.9 764.1999999999999,218.3" fill="none" stroke="#2e9a44" stroke-width="1.6"/><polyline points="786.5,213.5 789.3,218.1 792.0999999999999,213.5" fill="none" stroke="#2e9a44" stroke-width="1.6"/><polyline points="814.7,204.6 817.5,209.2 820.3,204.6" fill="none" stroke="#2e9a44" stroke-width="1.6"/><polyline points="871.3000000000001,209.1 874.1,213.7 876.9,209.1" fill="none" stroke="#2e9a44" stroke-width="1.6"/><polyline points="927.8000000000001,213.5 930.6,218.1 933.4,213.5" fill="none" stroke="#2e9a44" stroke-width="1.6"/><polyline points="984.4000000000001,211.9 987.2,216.5 990.0,211.9" fill="none" stroke="#2e9a44" stroke-width="1.6"/><polyline points="1041.5,217.0 1044.3,221.6 1047.1,217.0" fill="none" stroke="#2e9a44" stroke-width="1.6"/><polyline points="1097.5,206.6 1100.3,211.2 1103.1,206.6" fill="none" stroke="#2e9a44" stroke-width="1.6"/><polyline points="1154.4,210.6 1157.2,215.2 1160.0,210.6" fill="none" stroke="#2e9a44" stroke-width="1.6"/><polyline points="1182.8,206.6 1185.6,211.2 1188.3999999999999,206.6" fill="none" stroke="#2e9a44" stroke-width="1.6"/><polyline points="1210.4,209.0 1213.2,213.6 1216.0,209.0" fill="none" stroke="#2e9a44" stroke-width="1.6"/><polyline points="1239.4,213.6 1242.2,218.2 1245.0,213.6" fill="none" stroke="#2e9a44" stroke-width="1.6"/><polyline points="1267.3,203.3 1270.1,207.9 1272.8999999999999,203.3" fill="none" stroke="#2e9a44" stroke-width="1.6"/><polyline points="1295.8,187.1 1298.6,191.7 1301.3999999999999,187.1" fill="none" stroke="#2e9a44" stroke-width="1.6"/><polyline points="1311.2,176.20000000000002 1314,180.8 1316.8,176.20000000000002" fill="none" stroke="#2e9a44" stroke-width="1.6"/><polyline points="1340.3,166.3 1343.1,170.9 1345.8999999999999,166.3" fill="none" stroke="#2e9a44" stroke-width="1.6"/><polyline points="1368.3,186.9 1371.1,191.5 1373.8999999999999,186.9" fill="none" stroke="#2e9a44" stroke-width="1.6"/><polyline points="1396.5,203.5 1399.3,208.1 1402.1,203.5" fill="none" stroke="#2e9a44" stroke-width="1.6"/><polyline points="1424.5,213.20000000000002 1427.3,217.8 1430.1,213.20000000000002" fill="none" stroke="#2e9a44" stroke-width="1.6"/><polyline points="1453.7,208.8 1456.5,213.4 1459.3,208.8" fill="none" stroke="#2e9a44" stroke-width="1.6"/><polyline points="1481.7,206.5 1484.5,211.1 1487.3,206.5" fill="none" stroke="#2e9a44" stroke-width="1.6"/><polyline points="1509.7,211.1 1512.5,215.7 1515.3,211.1" fill="none" stroke="#2e9a44" stroke-width="1.6"/><polyline points="1566.6000000000001,206.5 1569.4,211.1 1572.2,206.5" fill="none" stroke="#2e9a44" stroke-width="1.6"/><polyline points="531.7,240.1 534.5,235.5 537.3,240.1" fill="none" stroke="#2e9a44" stroke-width="1.6"/><polyline points="560.4000000000001,241.7 563.2,237.1 566.0,241.7" fill="none" stroke="#2e9a44" stroke-width="1.6"/><polyline points="577.5,255.5 580.3,250.9 583.0999999999999,255.5" fill="none" stroke="#2e9a44" stroke-width="1.6"/><polyline points="588.2,253.29999999999998 591,248.7 593.8,253.29999999999998" fill="none" stroke="#2e9a44" stroke-width="1.6"/><polyline points="599.2,259.5 602,254.9 604.8,259.5" fill="none" stroke="#2e9a44" stroke-width="1.6"/><polyline points="611.0,263.0 613.8,258.4 616.5999999999999,263.0" fill="none" stroke="#2e9a44" stroke-width="1.6"/><polyline points="622.2,266.0 625,261.4 627.8,266.0" fill="none" stroke="#2e9a44" stroke-width="1.6"/><polyline points="633.4000000000001,272.6 636.2,268 639.0,272.6" fill="none" stroke="#2e9a44" stroke-width="1.6"/><polyline points="644.6,270.6 647.4,266 650.1999999999999,270.6" fill="none" stroke="#2e9a44" stroke-width="1.6"/><polyline points="656.4000000000001,265.40000000000003 659.2,260.8 662.0,265.40000000000003" fill="none" stroke="#2e9a44" stroke-width="1.6"/><polyline points="673.5,261.40000000000003 676.3,256.8 679.0999999999999,261.40000000000003" fill="none" stroke="#2e9a44" stroke-width="1.6"/><polyline points="701.3000000000001,255.4 704.1,250.8 706.9,255.4" fill="none" stroke="#2e9a44" stroke-width="1.6"/><polyline points="729.4000000000001,264.70000000000005 732.2,260.1 735.0,264.70000000000005" fill="none" stroke="#2e9a44" stroke-width="1.6"/><polyline points="758.6,268.8 761.4,264.2 764.1999999999999,268.8" fill="none" stroke="#2e9a44" stroke-width="1.6"/><polyline points="786.5,264.70000000000005 789.3,260.1 792.0999999999999,264.70000000000005" fill="none" stroke="#2e9a44" stroke-width="1.6"/><polyline points="814.7,259.6 817.5,255 820.3,259.6" fill="none" stroke="#2e9a44" stroke-width="1.6"/><polyline points="871.3000000000001,265.3 874.1,260.7 876.9,265.3" fill="none" stroke="#2e9a44" stroke-width="1.6"/><polyline points="927.8000000000001,268.1 930.6,263.5 933.4,268.1" fill="none" stroke="#2e9a44" stroke-width="1.6"/><polyline points="984.4000000000001,262.6 987.2,258 990.0,262.6" fill="none" stroke="#2e9a44" stroke-width="1.6"/><polyline points="1041.5,268.8 1044.3,264.2 1047.1,268.8" fill="none" stroke="#2e9a44" stroke-width="1.6"/><polyline points="1097.5,258.5 1100.3,253.9 1103.1,258.5" fill="none" stroke="#2e9a44" stroke-width="1.6"/><polyline points="1154.4,263.70000000000005 1157.2,259.1 1160.0,263.70000000000005" fill="none" stroke="#2e9a44" stroke-width="1.6"/><polyline points="1182.8,256.40000000000003 1185.6,251.8 1188.3999999999999,256.40000000000003" fill="none" stroke="#2e9a44" stroke-width="1.6"/><polyline points="1210.4,261.3 1213.2,256.7 1216.0,261.3" fill="none" stroke="#2e9a44" stroke-width="1.6"/><polyline points="1239.4,258.0 1242.2,253.4 1245.0,258.0" fill="none" stroke="#2e9a44" stroke-width="1.6"/><polyline points="1267.3,253.6 1270.1,249 1272.8999999999999,253.6" fill="none" stroke="#2e9a44" stroke-width="1.6"/><polyline points="1295.8,240.2 1298.6,235.6 1301.3999999999999,240.2" fill="none" stroke="#2e9a44" stroke-width="1.6"/><polyline points="1311.2,234.5 1314,229.9 1316.8,234.5" fill="none" stroke="#2e9a44" stroke-width="1.6"/><polyline points="1340.3,232.0 1343.1,227.4 1345.8999999999999,232.0" fill="none" stroke="#2e9a44" stroke-width="1.6"/><polyline points="1368.3,240.2 1371.1,235.6 1373.8999999999999,240.2" fill="none" stroke="#2e9a44" stroke-width="1.6"/><polyline points="1396.5,253.9 1399.3,249.3 1402.1,253.9" fill="none" stroke="#2e9a44" stroke-width="1.6"/><polyline points="1424.5,258.2 1427.3,253.6 1430.1,258.2" fill="none" stroke="#2e9a44" stroke-width="1.6"/><polyline points="1453.7,261.20000000000005 1456.5,256.6 1459.3,261.20000000000005" fill="none" stroke="#2e9a44" stroke-width="1.6"/><polyline points="1481.7,256.5 1484.5,251.9 1487.3,256.5" fill="none" stroke="#2e9a44" stroke-width="1.6"/><polyline points="1509.7,264.0 1512.5,259.4 1515.3,264.0" fill="none" stroke="#2e9a44" stroke-width="1.6"/><polyline points="1566.6000000000001,259.1 1569.4,254.5 1572.2,259.1" fill="none" stroke="#2e9a44" stroke-width="1.6"/><polygon points="534.50,215.20 535.69,218.06 538.78,218.31 536.43,220.33 537.15,223.34 534.50,221.72 531.85,223.34 532.57,220.33 530.22,218.31 533.31,218.06" fill="#e8434a"/><polygon points="563.20,220.50 564.39,223.36 567.48,223.61 565.13,225.63 565.85,228.64 563.20,227.03 560.55,228.64 561.27,225.63 558.92,223.61 562.01,223.36" fill="#e8434a"/><polygon points="580.30,228.40 581.49,231.26 584.58,231.51 582.23,233.53 582.95,236.54 580.30,234.93 577.65,236.54 578.37,233.53 576.02,231.51 579.11,231.26" fill="#e8434a"/><circle cx="591" cy="235.1" r="2.7" fill="#e8434a"/><circle cx="602" cy="243.4" r="2.7" fill="#e8434a"/><circle cx="613.8" cy="252.2" r="2.7" fill="#e8434a"/><circle cx="625" cy="259.5" r="2.7" fill="#e8434a"/><circle cx="636.2" cy="267.4" r="2.7" fill="#e8434a"/><circle cx="647.4" cy="273.3" r="2.7" fill="#e8434a"/><circle cx="659.2" cy="270.7" r="2.7" fill="#e8434a"/><circle cx="676.3" cy="263.2" r="2.7" fill="#e8434a"/><circle cx="704.1" cy="267.9" r="2.7" fill="#e8434a"/><circle cx="732.2" cy="279.3" r="2.7" fill="#e8434a"/><circle cx="761.4" cy="276.6" r="2.7" fill="#e8434a"/><circle cx="789.3" cy="264.9" r="2.7" fill="#e8434a"/><circle cx="817.5" cy="264.9" r="2.7" fill="#e8434a"/><circle cx="874.1" cy="264.6" r="2.7" fill="#e8434a"/><circle cx="930.6" cy="261.4" r="2.7" fill="#e8434a"/><circle cx="987.2" cy="264.2" r="2.7" fill="#e8434a"/><circle cx="1044.3" cy="259.4" r="2.7" fill="#e8434a"/><circle cx="1100.3" cy="259.4" r="2.7" fill="#e8434a"/><circle cx="1157.2" cy="263.2" r="2.7" fill="#e8434a"/><circle cx="1185.6" cy="258.3" r="2.7" fill="#e8434a"/><circle cx="1213.2" cy="257.5" r="2.7" fill="#e8434a"/><circle cx="1242.2" cy="255.1" r="2.7" fill="#e8434a"/><circle cx="1270.1" cy="247.7" r="2.7" fill="#e8434a"/><circle cx="1298.6" cy="244.8" r="2.7" fill="#e8434a"/><circle cx="1314" cy="246.1" r="2.7" fill="#e8434a"/><circle cx="1343.1" cy="232.6" r="2.7" fill="#e8434a"/><circle cx="1371.1" cy="245.4" r="2.7" fill="#e8434a"/><circle cx="1399.3" cy="248.4" r="2.7" fill="#e8434a"/><circle cx="1427.3" cy="255.4" r="2.7" fill="#e8434a"/><circle cx="1456.5" cy="258" r="2.7" fill="#e8434a"/><circle cx="1484.5" cy="258" r="2.7" fill="#e8434a"/><circle cx="1512.5" cy="263.3" r="2.7" fill="#e8434a"/><circle cx="1569.4" cy="259.4" r="2.7" fill="#e8434a"/><polygon points="534.5,250.8 538.5,254.5 534.5,258.2 530.5,254.5" fill="#2a7fd4"/><polygon points="732.2,271.1 736.2,274.8 732.2,278.5 728.2,274.8" fill="#2a7fd4"/><polygon points="930.6,282.90000000000003 934.6,286.6 930.6,290.3 926.6,286.6" fill="#2a7fd4"/><polygon points="1185.6,277.40000000000003 1189.6,281.1 1185.6,284.8 1181.6,281.1" fill="#2a7fd4"/><polygon points="1484.5,277.90000000000003 1488.5,281.6 1484.5,285.3 1480.5,281.6" fill="#2a7fd4"/><polygon points="534.5,257.5 537.5,263.5 531.5,263.5" fill="#000"/><polygon points="563.2,255.5 566.2,261.5 560.2,261.5" fill="#000"/><polygon points="580.3,259.4 583.3,265.4 577.3,265.4" fill="#000"/><polygon points="591,259.4 594,265.4 588,265.4" fill="#000"/><polygon points="613.8,272 616.8,278 610.8,278" fill="#000"/><polygon points="625,269.3 628,275.3 622,275.3" fill="#000"/><polygon points="761.4,264.2 764.4,270.2 758.4,270.2" fill="#000"/><polygon points="846.4,267 849.4,273 843.4,273" fill="#000"/><polygon points="930.6,266.7 933.6,272.7 927.6,272.7" fill="#000"/><polygon points="1015,264.2 1018,270.2 1012,270.2" fill="#000"/><polygon points="1100.3,266.7 1103.3,272.7 1097.3,272.7" fill="#000"/><polygon points="1185.6,264.4 1188.6,270.4 1182.6,270.4" fill="#000"/><polygon points="1213.2,269.3 1216.2,275.3 1210.2,275.3" fill="#000"/><polygon points="1242.2,266.5 1245.2,272.5 1239.2,272.5" fill="#000"/><polygon points="1270.1,273.7 1273.1,279.7 1267.1,279.7" fill="#000"/><polygon points="1298.6,261.7 1301.6,267.7 1295.6,267.7" fill="#000"/><polygon points="1314,260 1317,266 1311,266" fill="#000"/><polygon points="1343.1,259.2 1346.1,265.2 1340.1,265.2" fill="#000"/><polygon points="1371.1,262.7 1374.1,268.7 1368.1,268.7" fill="#000"/><polygon points="1399.3,274.4 1402.3,280.4 1396.3,280.4" fill="#000"/><polygon points="1427.3,266.9 1430.3,272.9 1424.3,272.9" fill="#000"/><polygon points="1456.5,269.7 1459.5,275.7 1453.5,275.7" fill="#000"/><polygon points="1484.5,263.9 1487.5,269.9 1481.5,269.9" fill="#000"/><polygon points="1569.4,267.4 1572.4,273.4 1566.4,273.4" fill="#000"/><line x1="367" y1="191.5" x2="534" y2="191.5" stroke="#2e9a44" stroke-width="1" stroke-dasharray="1.3,1.4"/><line x1="412" y1="219.5" x2="534" y2="219.5" stroke="#e8434a" stroke-width="1" stroke-dasharray="1.3,1.4"/><line x1="367" y1="236.5" x2="534" y2="236.5" stroke="#2e9a44" stroke-width="1" stroke-dasharray="1.3,1.4"/><line x1="465" y1="254.5" x2="534" y2="254.5" stroke="#2a7fd4" stroke-width="1" stroke-dasharray="1.3,1.4"/><line x1="503" y1="259.5" x2="534" y2="259.5" stroke="#000" stroke-width="1" stroke-dasharray="1.3,1.4"/></svg>
<div class="r" style="left:343px;top:185px;width:24px;height:13px;background:#2e9a44;color:#fff;font-weight:bold;font-size:11px;line-height:13px;text-align:center;">143</div>
<div class="r" style="left:394px;top:213px;width:18px;height:13px;background:#e8434a;color:#fff;font-weight:bold;font-size:11px;line-height:13px;text-align:center;">99</div>
<div class="r" style="left:349px;top:230px;width:18px;height:13px;background:#2e9a44;color:#fff;font-weight:bold;font-size:11px;line-height:13px;text-align:center;">88</div>
<div class="r" style="left:438px;top:248px;width:27px;height:13px;background:#2a7fd4;color:#fff;font-weight:bold;font-size:11px;line-height:13px;text-align:center;">36.5</div>
<div class="r" style="left:485px;top:253px;width:18px;height:13px;background:#000;color:#fff;font-weight:bold;font-size:11px;line-height:13px;text-align:center;">13</div>
</body></html>
